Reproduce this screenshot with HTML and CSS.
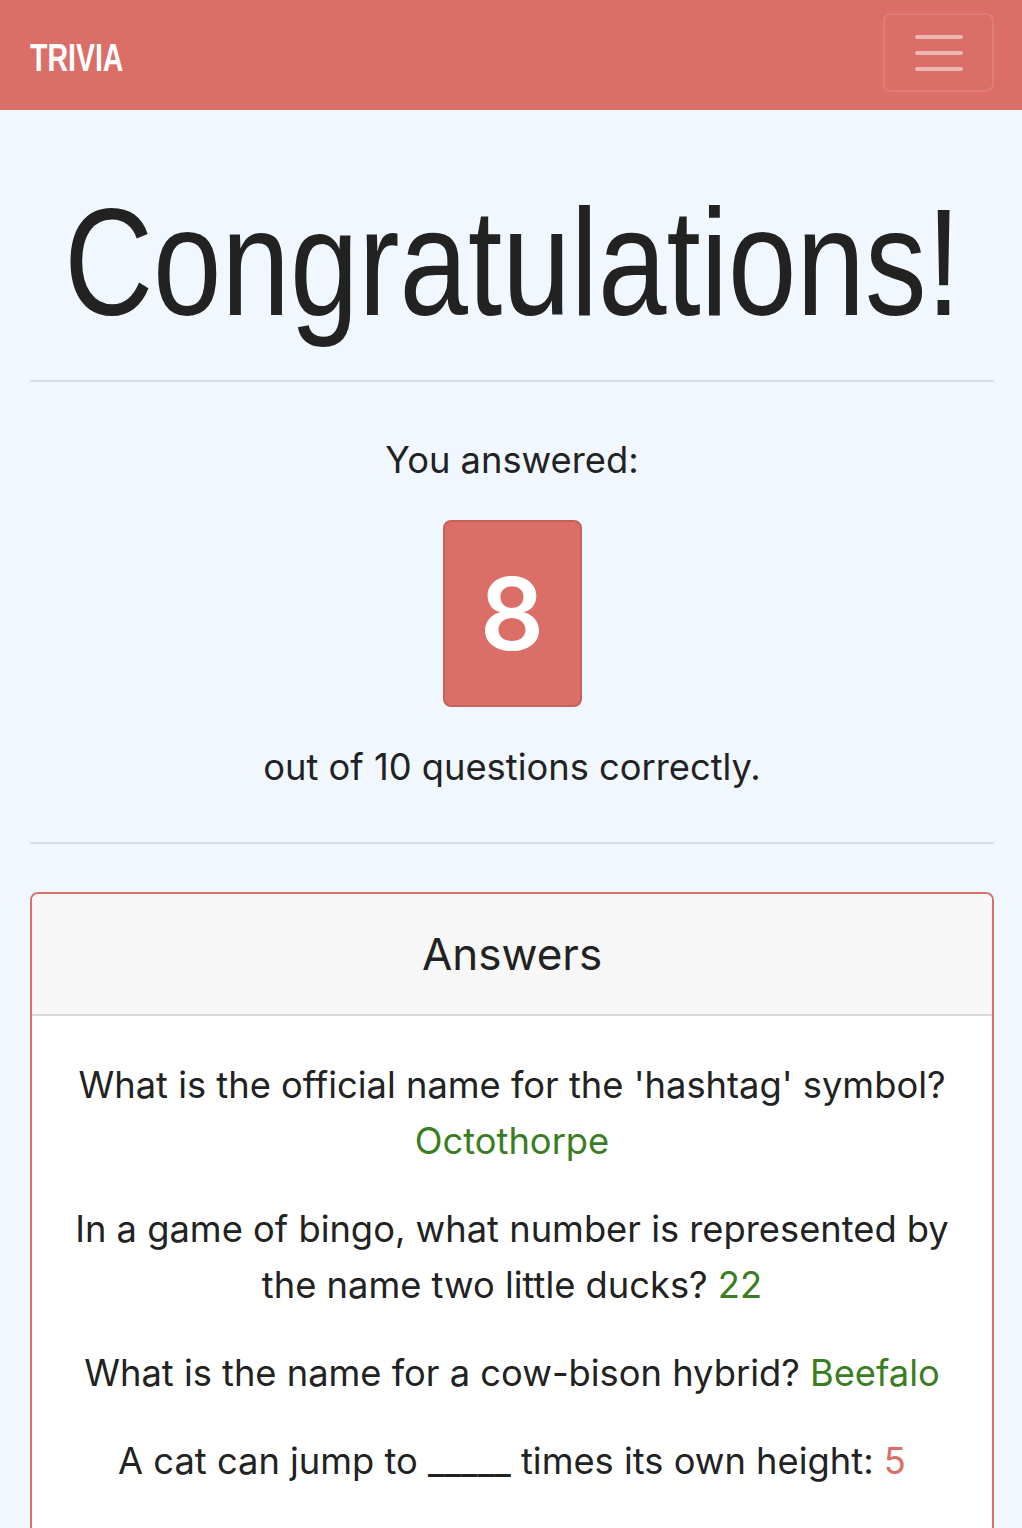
FILE: index.html
```html
<!DOCTYPE html>
<html lang="en">
<head>
<meta charset="utf-8">
<title>Trivia</title>
<link rel="stylesheet" href="styles.css">
</head>
<body>
<nav class="navbar">
  <a class="brand" href="#"><span class="brand-text">TRIVIA</span></a>
  <button class="toggler" type="button" aria-label="Toggle navigation">
    <svg width="48" height="36" viewBox="0 0 48 36">
      <path d="M2 2h44M2 18h44M2 34h44" stroke="rgba(255,255,255,0.5)" stroke-width="4" stroke-linecap="round"/>
    </svg>
  </button>
</nav>
<main class="container">
  <h1 class="title"><span class="title-text">Congratulations!</span></h1>
  <hr class="rule">
  <section class="score">
    <p class="score-text">You answered:</p>
    <div class="score-badge">8</div>
    <p class="score-text">out of 10 questions correctly.</p>
  </section>
  <hr class="rule">
  <div class="card">
    <div class="card-header">Answers</div>
    <div class="card-body">
      <p class="qa">What is the official name for the 'hashtag' symbol? <span class="right">Octothorpe</span></p>
      <p class="qa">In a game of bingo, what number is represented by the name two little ducks? <span class="right">22</span></p>
      <p class="qa">What is the name for a cow-bison hybrid? <span class="right">Beefalo</span></p>
      <p class="qa">A cat can jump to _____ times its own height: <span class="wrong">5</span></p>
    </div>
  </div>
</main>
</body>
</html>
```
FILE: styles.css
```css
html, body {
  margin: 0;
  padding: 0;
}
body {
  background: #f0f7fe;
  color: #222222;
  font-family: Inter, "Noto Sans", "Liberation Sans", sans-serif;
  font-size: 36.3px;
  line-height: 56px;
}
.navbar {
  height: 110px;
  background: #db6f68;
  display: flex;
  align-items: center;
  justify-content: space-between;
  padding: 0 28px 0 30px;
  box-sizing: border-box;
}
.brand {
  color: #ffffff;
  text-decoration: none;
  font-family: "Liberation Sans", Arial, sans-serif;
  font-weight: 700;
  font-size: 38px;
  line-height: 1;
  margin-top: 6px;
}
.brand-text {
  display: inline-block;
  transform: scaleX(0.75);
  transform-origin: left center;
}
.toggler {
  width: 111px;
  height: 79px;
  background: transparent;
  border: 2px solid rgba(255,255,255,0.1);
  border-radius: 8px;
  display: flex;
  align-items: center;
  justify-content: center;
  padding: 0;
  margin-top: -5px;
}
.toggler svg {
  display: block;
}
.container {
  padding: 0 28px 0 30px;
  text-align: center;
}
.title {
  margin: 0;
  padding-top: 62px;
  display: flex;
  justify-content: center;
  font-family: "Liberation Sans", Arial, sans-serif;
  font-weight: 400;
  font-size: 152px;
  line-height: 180px;
  color: #222222;
  white-space: nowrap;
}
.title-text {
  display: block;
  flex: none;
  transform: scaleX(0.81);
  transform-origin: center;
}
.rule {
  margin: 28px 0 0;
  border: 0;
  border-top: 2px solid rgba(0,0,0,0.1);
}
.score {
  padding: 50px 0 19px;
  display: flex;
  flex-direction: column;
  align-items: center;
}
.score-text {
  margin: 0;
}
.score-badge {
  margin: 32px 0;
  width: 139px;
  height: 187px;
  box-sizing: border-box;
  background: #db6f68;
  border: 2px solid #c9615b;
  border-radius: 8px;
  color: #ffffff;
  font-weight: 600;
  font-size: 100px;
  display: flex;
  align-items: center;
  justify-content: center;
  line-height: 1;
}
.card {
  margin-top: 48px;
  border: 2px solid #db6f68;
  border-radius: 8px;
  background: #ffffff;
  overflow: hidden;
}
.card-header {
  background: #f7f7f7;
  border-bottom: 2px solid #d8d8d8;
  height: 122px;
  box-sizing: border-box;
  display: flex;
  align-items: center;
  justify-content: center;
  font-size: 44px;
  font-weight: 400;
}
.card-body {
  padding: 41px 40px 40px;
}
.qa {
  margin: 0 0 32px;
}
.right {
  color: #3b7d23;
}
.wrong {
  color: #db6f68;
}
```
